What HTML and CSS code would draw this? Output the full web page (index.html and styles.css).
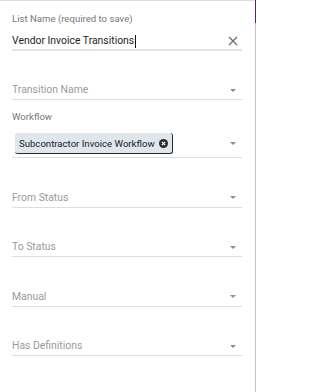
FILE: index.html
```html
<!DOCTYPE html>
<html>
<head>
<meta charset="utf-8">
<link rel="stylesheet" href="styles.css">
</head>
<body>
<div class="panel">
  <div class="field">
    <div class="label">List Name (required to save)</div>
    <div class="input-row">
      <span class="value">Vendor Invoice Transitions</span><span class="cursor"></span>
      <svg class="clear" width="10" height="10" viewBox="0 0 10 10"><path d="M1 1L9 9M9 1L1 9" stroke="#6b6b6b" stroke-width="1.3" fill="none"/></svg>
    </div>
  </div>

  <div class="select first"><span class="placeholder">Transition Name</span><span class="arrow"></span></div>

  <div class="field workflow">
    <div class="label">Workflow</div>
    <div class="chip-row">
      <span class="chip">Subcontractor Invoice Workflow
        <svg class="chip-x" width="9" height="9" viewBox="0 0 10 10"><circle cx="5" cy="5" r="5" fill="#2b2b2b"/><path d="M3.2 3.2L6.8 6.8M6.8 3.2L3.2 6.8" stroke="#fff" stroke-width="1.4"/></svg>
      </span>
      <span class="arrow"></span>
    </div>
  </div>

  <div class="select"><span class="placeholder">From Status</span><span class="arrow"></span></div>
  <div class="select"><span class="placeholder">To Status</span><span class="arrow"></span></div>
  <div class="select"><span class="placeholder">Manual</span><span class="arrow"></span></div>
  <div class="select"><span class="placeholder">Has Definitions</span><span class="arrow"></span></div>
</div>
</body>
</html>
```
FILE: styles.css
```css
html, body {
  margin: 0;
  padding: 0;
  background: #fff;
}
body {
  font-family: Roboto, "Liberation Sans", sans-serif;
}
.panel {
  position: relative;
  box-sizing: border-box;
  width: 256px;
  height: 392px;
  border-top: 1px solid #dcdcdc;
  border-right: 1px solid #c4c4c4;
  padding: 11px 13px 0 12px;
  display: flex;
  flex-direction: column;
}
.panel::after {
  content: "";
  position: absolute;
  top: -1px;
  right: -1px;
  width: 1px;
  height: 23px;
  background: #5e1f6e;
}
.label {
  font-size: 9.6px;
  line-height: 14px;
  color: #777;
}
.input-row {
  display: flex;
  align-items: center;
  margin-top: 4px;
  padding-top: 3px;
  height: 16px;
  border-bottom: 2px solid #dde5eb;
}
.value {
  font-size: 10.4px;
  line-height: 16px;
  color: #1e1e1e;
}
.cursor {
  width: 1px;
  height: 13px;
  background: #111;
  margin-left: 1px;
}
.clear {
  margin-left: auto;
  margin-right: 4px;
}
.select {
  display: flex;
  align-items: center;
  margin-top: 31.5px;
  height: 16px;
  padding-bottom: 1px;
  border-bottom: 1px solid #dedede;
}
.select.first {
  margin-top: 31px;
}
.placeholder {
  font-size: 10.4px;
  line-height: 16px;
  color: #9a9a9a;
}
.arrow {
  margin-left: auto;
  margin-right: 6px;
  width: 0;
  height: 0;
  border-left: 3.5px solid transparent;
  border-right: 3.5px solid transparent;
  border-top: 3.5px solid #8f8f8f;
}
.workflow {
  margin-top: 10px;
}
.chip-row {
  display: flex;
  align-items: center;
  margin-top: 9px;
  padding-bottom: 3px;
  border-bottom: 1px solid #dedede;
}
.chip {
  display: inline-flex;
  align-items: center;
  gap: 4px;
  margin-left: 3px;
  height: 20px;
  padding: 0 4px 0 4px;
  background: #dfe6ec;
  border-radius: 3px;
  border-right: 1px solid #2a2a2a;
  border-bottom: 1px solid #2a2a2a;
  font-size: 9.6px;
  color: #222;
}
```
